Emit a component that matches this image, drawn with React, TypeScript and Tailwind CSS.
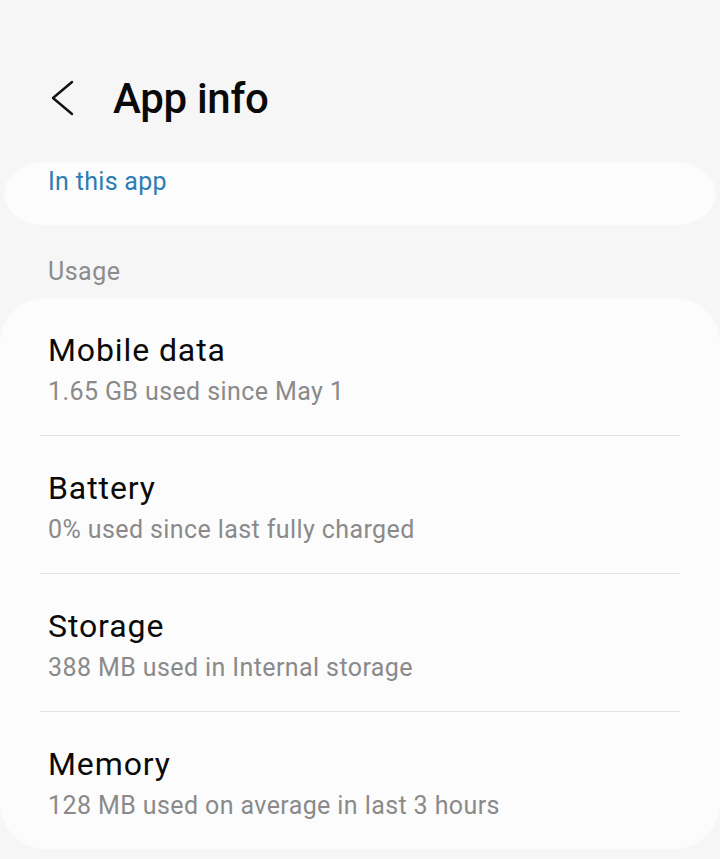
interface IUsageRow {
  title: string;
  detail: string;
}

const usageRows: IUsageRow[] = [
  { title: "Mobile data", detail: "1.65 GB used since May 1" },
  { title: "Battery", detail: "0% used since last fully charged" },
  { title: "Storage", detail: "388 MB used in Internal storage" },
  { title: "Memory", detail: "128 MB used on average in last 3 hours" },
];

const UsageRow = ({ row, last }: { row: IUsageRow; last: boolean }) => {
  return (
    <div className="flex flex-col">
      <div className="flex flex-col h-[137px] px-12 pt-[32px]">
        <p className="text-[32px] leading-[40px] tracking-[0.9px] text-[#0a0a0a]">
          {row.title}
        </p>
        <p className="mt-[7px] text-[25px] leading-[30px] tracking-[0.4px] text-[#8a8a8a]">
          {row.detail}
        </p>
      </div>
      {!last && <div className="mx-10 h-px bg-[#e4e4e4]" />}
    </div>
  );
};

const App = () => {
  return (
    <div
      className="w-[720px] h-[859px] overflow-hidden bg-[#f6f6f6] flex flex-col"
      style={{ fontFamily: "Roboto, 'Noto Sans', sans-serif" }}
    >
      {/* header */}
      <div className="flex items-center h-[80px] mt-[58px] pl-[50px]">
        <svg
          viewBox="0 0 24 36"
          className="w-[24px] h-[36px]"
          fill="none"
          stroke="#111"
          strokeWidth={2.4}
          strokeLinecap="round"
          strokeLinejoin="round"
        >
          <path d="M22 2 L3 18 L22 34" />
        </svg>
        <h1 className="ml-[39px] text-[42px] font-medium text-[#0a0a0a] tracking-[-0.3px]">
          App info
        </h1>
      </div>

      {/* in this app */}
      <div className="mt-[24px] mx-[4px] h-[63px] rounded-[40px/32px] bg-[#fcfcfc] px-[44px] pt-[3px]">
        <p className="text-[25px] leading-[34px] tracking-[0.3px] text-[#2c7db3]">
          In this app
        </p>
      </div>

      {/* usage */}
      <p className="mt-[32px] px-12 text-[25px] leading-[30px] tracking-[0.5px] text-[#8c8c8c]">
        Usage
      </p>
      <div className="mt-[11px] rounded-[46px] bg-[#fcfcfc] flex flex-col">
        {usageRows.map((row, i) => (
          <UsageRow key={row.title} row={row} last={i === usageRows.length - 1} />
        ))}
      </div>
    </div>
  );
};

export default App;
